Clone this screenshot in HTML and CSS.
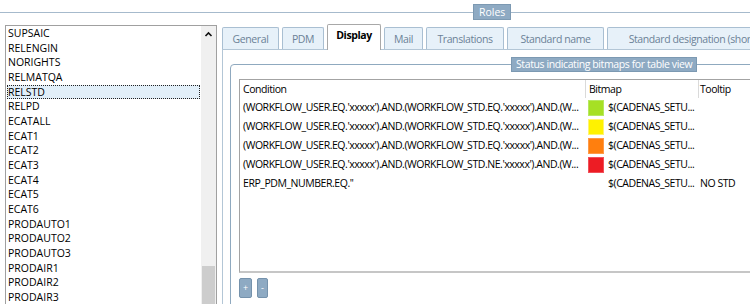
FILE: index.html
```html
<!DOCTYPE html>
<html lang="en">
<head>
  <meta charset="UTF-8">
  <title>Roles</title>
  <link rel="stylesheet" href="styles.css">
</head>
<body>
  <fieldset class="roles">
    <legend>Roles</legend>
    <div class="roles-body">
      <div class="role-list">
        <ul class="role-items">
          <li>SUPSAIC</li>
          <li>RELENGIN</li>
          <li>NORIGHTS</li>
          <li>RELMATQA</li>
          <li class="selected">RELSTD</li>
          <li>RELPD</li>
          <li>ECATALL</li>
          <li>ECAT1</li>
          <li>ECAT2</li>
          <li>ECAT3</li>
          <li>ECAT4</li>
          <li>ECAT5</li>
          <li>ECAT6</li>
          <li>PRODAUTO1</li>
          <li>PRODAUTO2</li>
          <li>PRODAUTO3</li>
          <li>PRODAIR1</li>
          <li>PRODAIR2</li>
          <li>PRODAIR3</li>
        </ul>
        <div class="scrollbar">
          <svg class="arrow" width="15" height="14" viewBox="0 0 15 14"><polyline points="4.5,9 7.5,6 10.5,9" fill="none" stroke="#111" stroke-width="1.6"/></svg>
          <div class="thumb"></div>
        </div>
      </div>

      <div class="tabs">
        <div class="tab-row">
          <div class="tab tab-general">General</div>
          <div class="tab tab-pdm">PDM</div>
          <div class="tab tab-display active">Display</div>
          <div class="tab tab-mail">Mail</div>
          <div class="tab tab-trans">Translations</div>
          <div class="tab tab-stdname">Standard name</div>
          <div class="tab tab-stddesig">Standard designation (short name)</div>
        </div>
        <div class="tab-pane">
          <fieldset class="group">
            <legend>Status indicating bitmaps for table view</legend>
            <div class="grid">
              <div class="grid-head">
                <div class="col-cond">Condition</div>
                <div class="col-bmp">Bitmap</div>
                <div class="col-tip">Tooltip</div>
              </div>
              <div class="grid-row">
                <div class="col-cond">(WORKFLOW_USER.EQ.'xxxxx').AND.(WORKFLOW_STD.EQ.'xxxxx').AND.(W...</div>
                <div class="col-bmp"><span class="swatch green"></span>$(CADENAS_SETU...</div>
                <div class="col-tip"></div>
              </div>
              <div class="grid-row">
                <div class="col-cond">(WORKFLOW_USER.EQ.'xxxxx').AND.(WORKFLOW_STD.EQ.'xxxxx').AND.(W...</div>
                <div class="col-bmp"><span class="swatch yellow"></span>$(CADENAS_SETU...</div>
                <div class="col-tip"></div>
              </div>
              <div class="grid-row">
                <div class="col-cond">(WORKFLOW_USER.EQ.'xxxxx').AND.(WORKFLOW_STD.EQ.'xxxxx').AND.(W...</div>
                <div class="col-bmp"><span class="swatch orange"></span>$(CADENAS_SETU...</div>
                <div class="col-tip"></div>
              </div>
              <div class="grid-row">
                <div class="col-cond">(WORKFLOW_USER.EQ.'xxxxx').AND.(WORKFLOW_STD.NE.'xxxxx').AND.(W...</div>
                <div class="col-bmp"><span class="swatch red"></span>$(CADENAS_SETU...</div>
                <div class="col-tip"></div>
              </div>
              <div class="grid-row">
                <div class="col-cond">ERP_PDM_NUMBER.EQ.''</div>
                <div class="col-bmp"><span class="swatch"></span>$(CADENAS_SETU...</div>
                <div class="col-tip">NO STD</div>
              </div>
            </div>
            <div class="grid-buttons">
              <button class="btn-add">+</button>
              <button class="btn-remove">-</button>
            </div>
          </fieldset>
        </div>
      </div>
    </div>
  </fieldset>
</body>
</html>
```

FILE: styles.css
```css
* { box-sizing:border-box; }
html, body { margin:0; padding:0; }
body {
  width:750px; height:304px; overflow:hidden;
  background:#fff; color:#000;
  font-family:"Open Sans", "Noto Sans", sans-serif;
  font-size:10.5px;
}

/* outer "Roles" group */
.roles {
  margin:4px 0 0; padding:0; min-width:0;
  border:none; border-top:1px solid #a6bacc;
}
.roles > legend {
  margin-left:473px; padding:0 5px;
  height:16px; line-height:14px;
  background:#8eaac3; color:#fff;
  border:1px solid #7c99b2;
}
.roles-body { display:flex; align-items:flex-start; padding-top:5px; }

/* role list box */
.role-list {
  display:flex; flex:none;
  margin-left:5px; width:212px; height:290px;
  border:1px solid #a0a0a0;
}
.role-items { flex:1; margin:0; padding:0; list-style:none; }
.role-items li {
  margin:0 1px; height:14.67px; line-height:12.67px;
  border:1px solid transparent; white-space:nowrap;
}
.role-items li.selected { background:#e2eff9; border:1px dotted #222; }
.scrollbar {
  width:15px; flex:none; background:#f0f0f0;
  display:flex; flex-direction:column;
}
.arrow { display:block; margin-top:1px; }
.thumb { margin:auto 1px 0; height:48px; background:#cdcdcd; }

/* tab control */
.tabs { flex:none; width:640px; margin-left:5px; margin-top:-1px; }
.tab-row { display:flex; align-items:flex-end; height:25px; }
.tab {
  flex:none; height:22px; margin-right:3px; padding-top:4px;
  text-align:center; white-space:nowrap; overflow:hidden;
  letter-spacing:-0.4px;
  background:#e7f1f9; color:#6b8197;
  border:1px solid #a9bfd2; border-bottom:none;
  border-radius:2px 2px 0 0;
}
.tab.active {
  position:relative; z-index:1;
  height:26px; margin-bottom:-1px; padding-top:3px;
  background:#fff; color:#000; font-weight:700;
  border-color:#a8a8a8;
}
.tab-general { width:57px; }
.tab-pdm { width:42px; }
.tab-display { width:54px; }
.tab-mail { width:39px; }
.tab-trans { width:78px; }
.tab-stdname { width:97px; }
.tab-stddesig { width:200px; }

.tab-pane {
  height:260px; padding:7px 0 0 7px;
  border:1px solid #b3c6d6;
}

/* status bitmap group */
.group {
  margin:0; padding:0 8px; min-width:0; height:260px;
  border:1px solid #8fa9bf; border-radius:4px;
}
.group > legend {
  margin-left:272px; padding:0 4px;
  height:15px; line-height:13px;
  letter-spacing:-0.4px;
  background:#8eaac3; color:#fff;
  border:1px solid #7c99b2;
}
.grid {
  margin-top:7px; height:194px;
  border:1px solid #a3a3a3; border-bottom:2px solid #c6c6c6;
  letter-spacing:-0.45px;
}
.grid-head, .grid-row { display:flex; white-space:nowrap; }
.grid-head { height:18px; line-height:18px; }
.grid-row { height:19px; line-height:19px; }
.col-cond { width:346px; padding-left:3px; overflow:hidden; }
.col-bmp { width:113px; padding-left:2px; display:flex; align-items:center; }
.col-tip { flex:1; padding-left:1px; }
.grid-head .col-cond, .grid-head .col-bmp { border-right:1px solid #dadada; }
.grid-head .col-bmp { padding-left:3px; }
.swatch { flex:none; width:16px; height:16px; margin-right:4px; }
.swatch.green { background:#a6e024; border:1px solid #b6e860; }
.swatch.yellow { background:#fff200; border:1px solid #fff570; }
.swatch.orange { background:#ff7f0e; border:1px solid #ff9a48; }
.swatch.red { background:#ed1c24; border:1px solid #f0505a; }

.grid-buttons { display:flex; gap:5px; margin-top:5px; }
.grid-buttons button {
  height:20px; padding:0; font:inherit; font-size:9px; line-height:16px;
  background:#8eaac3; color:#fff;
  border:1px solid #7592ac; border-radius:2px;
}
.btn-add { width:13px; }
.btn-remove { width:11px; }
```
